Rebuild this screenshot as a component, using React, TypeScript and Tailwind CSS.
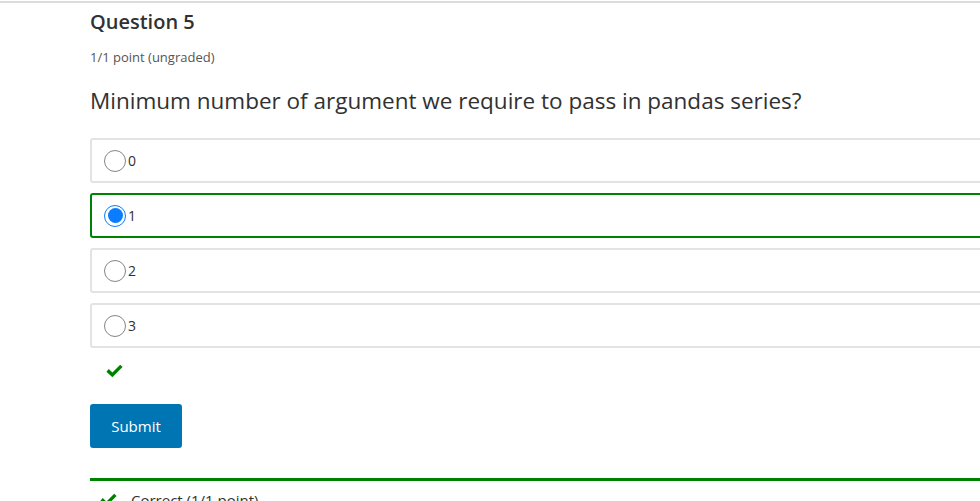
import React from "react";

const options = ["0", "1", "2", "3"];

function Check({ className }: { className?: string }) {
  return (
    <svg viewBox="0 0 16 13" className={className} fill="#008100">
      <path d="M0.4 7.1 L2.6 4.7 L6 8 L13.4 0.6 L15.6 2.8 L6 12.4 Z" />
    </svg>
  );
}

export default function App() {
  return (
    <div
      className="w-[980px] h-[501px] overflow-hidden bg-white"
      style={{ fontFamily: '"Open Sans", "Noto Sans", sans-serif' }}
    >
      <div className="border-t-2 border-[#dcdcdc] mt-px" />
      <div className="ml-[90px] w-[1000px]">
        <h3 className="text-[20px] leading-[26px] font-semibold text-[#313131] mt-[6px]">Question 5</h3>
        <div className="text-[13px] leading-[16px] text-[#555] mt-[14px]">1/1 point (ungraded)</div>
        <p className="text-[22.5px] leading-[30px] text-[#313131] mt-[21px]">
          Minimum number of argument we require to pass in pandas series?
        </p>
        <div className="flex flex-col gap-[10px] mt-[22px]">
          {options.map((o) => {
            const sel = o === "1";
            return (
              <label
                key={o}
                className={`flex items-center h-[45px] rounded-[3px] border-2 pl-[12px] ${
                  sel ? "border-[#008100]" : "border-[#e3e3e3]"
                }`}
              >
                {sel ? (
                  <span className="w-[22px] h-[22px] rounded-full border-[1.5px] border-[#0a7cff] flex items-center justify-center">
                    <span className="w-[15px] h-[15px] rounded-full bg-[#0a7cff]" />
                  </span>
                ) : (
                  <span className="w-[22px] h-[22px] rounded-full border border-[#858585]" />
                )}
                <span className="ml-[2px] text-[14px] text-[#313131]">{o}</span>
              </label>
            );
          })}
        </div>
        <div className="mt-[16px] ml-[16px] h-[16px]">
          <Check className="w-[17px] h-[14px]" />
        </div>
        <button className="mt-[24px] w-[92px] h-[44px] rounded-[3px] bg-[#0075b4] text-white text-[15px]">
          Submit
        </button>
        <div className="mt-[30px] border-t-[3px] border-[#008100]" />
        <div className="flex items-center mt-[8px] ml-[10px] text-[15px] text-[#313131]">
          <Check className="w-[17px] h-[14px]" />
          <span className="ml-[14px]">Correct (1/1 point)</span>
        </div>
      </div>
    </div>
  );
}
